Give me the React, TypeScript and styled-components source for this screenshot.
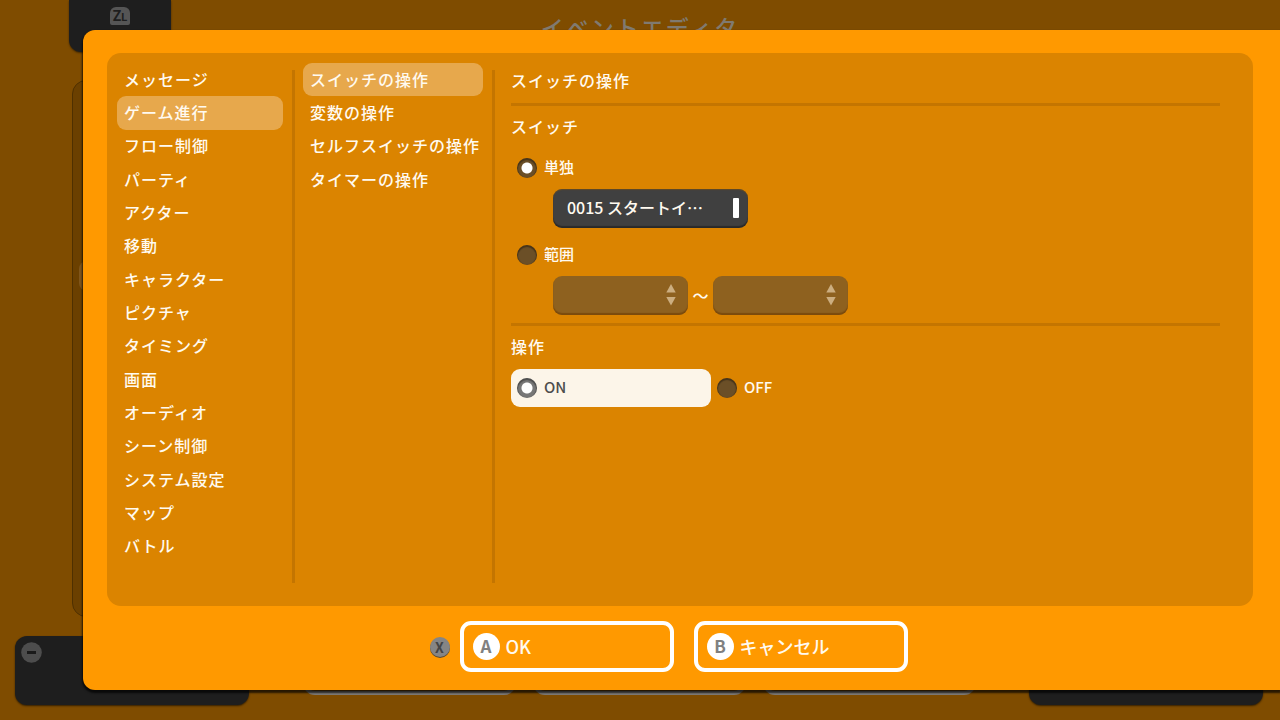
import React, { useState } from "react";
import styled, { createGlobalStyle, css } from "styled-components";

const color = {
  backdrop: "#7f4c00",
  backdropPanel: "#6b4000",
  dark: "#1e1e1e",
  modal: "#ff9900",
  panel: "#db8400",
  line: "#c47500",
  selected: "#e7a84c",
  text: "#fffaf0",
  field: "#404040",
  fieldOff: "#8e611f",
  radio: "#6b4f27",
  cream: "#fcf5e9",
};

const GlobalStyle = createGlobalStyle`
  *, *::before, *::after { box-sizing: border-box; }
  body {
    margin: 0;
    background: ${color.backdrop};
    color: ${color.text};
    font: 500 16px/24px "Noto Sans CJK JP", sans-serif;
  }
  button, select, input { margin: 0; font: inherit; color: inherit; }
  h1, h2, h3, ul { margin: 0; padding: 0; font: inherit; }
`;

const Screen = styled.div`
  position: relative;
  display: flex;
  min-height: 100vh;
  padding: 30px 0 30px 83px;
  overflow: hidden;
`;

/* Dimmed editor behind the dialog */
const Backdrop = styled.div`
  position: absolute;
  inset: 0;
  display: flex;
  flex-direction: column;
`;

const BackdropHeader = styled.header`
  display: grid;
  grid-template-columns: 1fr auto 1fr;
  height: 80px;
  padding: 0 69px;
`;

const ShoulderTab = styled.div`
  display: flex;
  justify-content: center;
  width: 102px;
  height: 52px;
  padding-top: 7px;
  border-radius: 0 0 12px 12px;
  background: ${color.dark};
  box-shadow: 0 1px 2px rgba(0, 0, 0, 0.5);
`;

const ShoulderKey = styled.span`
  width: 20px;
  height: 18px;
  border-radius: 6px 6px 2px 2px;
  background: #555;
  color: ${color.dark};
  font: bold 14px/18px Roboto, sans-serif;
  text-align: center;

  small {
    font-size: 11px;
  }
`;

const BackdropTitle = styled.h1`
  padding-top: 11px;
  color: #807a70;
  font-size: 23px;
  line-height: 32px;
  letter-spacing: 2px;
`;

const BackdropBody = styled.div`
  flex: 1;
  margin: 0 72px 19px;
  padding: 180px 6px;
  border: 1px solid #4f3000;
  border-radius: 14px;
  background: ${color.backdropPanel};
`;

const BackdropRow = styled.div`
  height: 30px;
  border-radius: 8px;
  background: #80561c;
`;

const BackdropFooter = styled.footer`
  display: flex;
  justify-content: space-between;
  align-items: flex-end;
  height: 84px;
  padding: 0 17px 15px 15px;
`;

const BackdropKey = styled.div`
  width: 234px;
  height: 69px;
  padding: 6px;
  border-radius: 12px;
  background: ${color.dark};
  box-shadow: 0 1px 2px rgba(0, 0, 0, 0.6);

  svg {
    display: block;
  }
`;

const BackdropButtons = styled.div`
  display: flex;
  gap: 17px;
  padding-bottom: 10px;
`;

const BackdropButton = styled.div`
  width: 213px;
  height: 50px;
  border: 4px solid #807c78;
  border-radius: 12px;
`;

/* Dialog */
const Dialog = styled.main`
  position: relative;
  display: flex;
  flex: 1;
  flex-direction: column;
  padding: 23px 27px 18px 24px;
  border-radius: 12px 0 0 12px;
  background: ${color.modal};
  box-shadow: 0 2px 2px 1px rgba(0, 0, 0, 0.7);
`;

const Panel = styled.div`
  display: flex;
  flex: 1;
  padding: 0 33px 0 10px;
  border-radius: 14px;
  background: ${color.panel};
`;

const Menu = styled.ul<{ $width: number }>`
  display: grid;
  grid-template-columns: minmax(0, 1fr);
  grid-template-rows: repeat(15, 1fr);
  flex: none;
  width: ${(p) => p.$width}px;
  height: 500px;
  margin-top: 10px;
  list-style: none;
`;

const MenuButton = styled.button<{ $active: boolean }>`
  display: block;
  width: 100%;
  height: 100%;
  padding: 0 0 2px 7px;
  border: 0;
  border-radius: 9px;
  background: ${(p) => (p.$active ? color.selected : "transparent")};
  letter-spacing: 1px;
  line-height: 30px;
  text-align: left;
  white-space: nowrap;
`;

const Divider = styled.div`
  flex: none;
  width: 3px;
  margin: 17px 8px 23px 9px;
  background: ${color.line};
`;

const Detail = styled.section`
  flex: 1;
  min-width: 0;
  margin-left: 8px;
  padding-top: 15px;
`;

const DetailTitle = styled.h2`
  padding-bottom: 3px;
  letter-spacing: 1px;
`;

const Rule = styled.hr`
  height: 3px;
  margin: 8px 0;
  border: 0;
  background: ${color.line};
`;

const GroupTitle = styled.h3`
  margin-bottom: 11px;
  letter-spacing: 1px;
`;

const OptionRow = styled.div`
  display: flex;
`;

const Option = styled.label<{ $highlight?: boolean }>`
  display: flex;
  align-items: center;
  gap: 7px;
  width: 200px;
  height: 38px;
  padding-left: 6px;
  border-radius: 9px;
  font-size: 15px;
  ${(p) =>
    p.$highlight &&
    css`
      background: ${color.cream};
      color: #4d4d4d;
    `}
`;

const Caption = styled.span`
  padding-bottom: 2px;
`;

const Radio = styled.input.attrs({ type: "radio" })<{ $ring?: string }>`
  appearance: none;
  width: 20px;
  height: 20px;
  border-radius: 50%;
  background: ${(p) => p.$ring ?? color.radio};
  box-shadow: inset 0 1px 1px 1px rgba(0, 0, 0, 0.35);

  &:checked {
    background: radial-gradient(circle, #fff 5px, ${(p) => p.$ring ?? color.radio} 6px);
  }
`;

const FieldRow = styled.div`
  display: flex;
  align-items: center;
  margin: 2px 0 8px 42px;
`;

const SwitchButton = styled.button`
  display: flex;
  align-items: center;
  justify-content: space-between;
  width: 195px;
  height: 39px;
  padding: 0 9px 2px 14px;
  border: 0;
  border-radius: 9px;
  background: ${color.field};
  box-shadow: inset 0 -2px 1px rgba(0, 0, 0, 0.35), inset 0 1px 1px rgba(120, 80, 20, 0.6);
`;

const Caret = styled.span`
  width: 6px;
  height: 20px;
  border-radius: 1px;
  background: #fff;
`;

const SelectBox = styled.div`
  display: grid;
  align-items: center;
  width: 135px;

  select,
  svg {
    grid-area: 1 / 1;
  }

  select {
    appearance: none;
    width: 100%;
    height: 39px;
    padding: 0 30px 0 14px;
    border: 0;
    border-radius: 9px;
    background: ${color.fieldOff};
    box-shadow: inset 0 -2px 1px rgba(110, 60, 0, 0.6);
    opacity: 1;
  }

  svg {
    justify-self: end;
    margin: 0 12px 2px 0;
    pointer-events: none;
  }
`;

const Tilde = styled.span`
  width: 25px;
  padding-bottom: 2px;
  text-align: center;
`;

const Footer = styled.footer`
  display: flex;
  align-items: center;
  justify-content: center;
  gap: 20px;
  padding: 15px 23px 0 0;
`;

const OkGroup = styled.div`
  display: flex;
  align-items: center;
  gap: 10px;
`;

const FooterButton = styled.button`
  display: flex;
  align-items: center;
  gap: 6px;
  width: 214px;
  height: 51px;
  padding: 0 9px;
  border: 4px solid #fff;
  border-radius: 11px;
  background: transparent;
  font-size: 18px;
`;

const PadKey = styled.span<{ $small?: boolean }>`
  width: ${(p) => (p.$small ? 20 : 27)}px;
  height: ${(p) => (p.$small ? 20 : 27)}px;
  border-radius: 50%;
  background: ${(p) => (p.$small ? "#858585" : "#fff")};
  color: ${(p) => (p.$small ? "#444" : "#808080")};
  font: bold ${(p) => (p.$small ? "14px/20px" : "17px/26px")} "Noto Sans CJK JP", sans-serif;
  text-align: center;
  ${(p) => p.$small && "box-shadow: 0 1px 0 #5a4a30;"}
`;

const categories = [
  "メッセージ",
  "ゲーム進行",
  "フロー制御",
  "パーティ",
  "アクター",
  "移動",
  "キャラクター",
  "ピクチャ",
  "タイミング",
  "画面",
  "オーディオ",
  "シーン制御",
  "システム設定",
  "マップ",
  "バトル",
];

const commands = ["スイッチの操作", "変数の操作", "セルフスイッチの操作", "タイマーの操作"];

function MenuList({ items, initial, width, label }: { items: string[]; initial: number; width: number; label: string }) {
  const [active, setActive] = useState(initial);
  return (
    <Menu $width={width} aria-label={label}>
      {items.map((item, i) => (
        <li key={item}>
          <MenuButton type="button" $active={i === active} aria-pressed={i === active} onClick={() => setActive(i)}>
            {item}
          </MenuButton>
        </li>
      ))}
    </Menu>
  );
}

function RangeSelect({ label, disabled }: { label: string; disabled: boolean }) {
  return (
    <SelectBox>
      <select aria-label={label} disabled={disabled} defaultValue="">
        <option value="" />
      </select>
      <svg width="10" height="22" viewBox="0 0 10 22" fill="#ccae80" aria-hidden="true">
        <path d="M5 0 9.700 8.500H.3z" />
        <path d="M.3 13h9.400L5 21.500z" />
      </svg>
    </SelectBox>
  );
}

export default function App() {
  const [target, setTarget] = useState("single");
  const [operation, setOperation] = useState("on");

  return (
    <>
      <GlobalStyle />
      <Screen>
        <Backdrop aria-hidden="true">
          <BackdropHeader>
            <ShoulderTab>
              <ShoulderKey>
                Z<small>L</small>
              </ShoulderKey>
            </ShoulderTab>
            <BackdropTitle>イベントエディタ</BackdropTitle>
          </BackdropHeader>
          <BackdropBody>
            <BackdropRow />
          </BackdropBody>
          <BackdropFooter>
            <BackdropKey>
              <svg width="21" height="21" viewBox="0 0 21 21">
                <circle cx="10.500" cy="10.500" r="10.300" fill="#4d4d4d" />
                <path d="M6 9h9v3H6z" fill="#1a1a1a" />
              </svg>
            </BackdropKey>
            <BackdropButtons>
              <BackdropButton />
              <BackdropButton />
              <BackdropButton />
            </BackdropButtons>
            <BackdropKey />
          </BackdropFooter>
        </Backdrop>

        <Dialog>
          <Panel>
            <MenuList items={categories} initial={1} width={166} label="カテゴリ" />
            <Divider />
            <MenuList items={commands} initial={0} width={180} label="コマンド" />
            <Divider />
            <Detail>
              <DetailTitle>スイッチの操作</DetailTitle>
              <Rule />
              <div role="radiogroup" aria-labelledby="target-title">
                <GroupTitle id="target-title">スイッチ</GroupTitle>
                <Option>
                  <Radio name="target" checked={target === "single"} onChange={() => setTarget("single")} />
                  <Caption>単独</Caption>
                </Option>
                <FieldRow>
                  <SwitchButton type="button">
                    <Caption>0015 スタートイ…</Caption>
                    <Caret />
                  </SwitchButton>
                </FieldRow>
                <Option>
                  <Radio name="target" checked={target === "range"} onChange={() => setTarget("range")} />
                  <Caption>範囲</Caption>
                </Option>
                <FieldRow>
                  <RangeSelect label="範囲の開始" disabled={target !== "range"} />
                  <Tilde>～</Tilde>
                  <RangeSelect label="範囲の終了" disabled={target !== "range"} />
                </FieldRow>
              </div>
              <Rule />
              <div role="radiogroup" aria-labelledby="operation-title">
                <GroupTitle id="operation-title">操作</GroupTitle>
                <OptionRow>
                  <Option $highlight={operation === "on"}>
                    <Radio
                      name="operation"
                      $ring={operation === "on" ? "#777" : undefined}
                      checked={operation === "on"}
                      onChange={() => setOperation("on")}
                    />
                    <Caption>ON</Caption>
                  </Option>
                  <Option $highlight={operation === "off"}>
                    <Radio
                      name="operation"
                      $ring={operation === "off" ? "#777" : undefined}
                      checked={operation === "off"}
                      onChange={() => setOperation("off")}
                    />
                    <Caption>OFF</Caption>
                  </Option>
                </OptionRow>
              </div>
            </Detail>
          </Panel>
          <Footer>
            <OkGroup>
              <PadKey $small>X</PadKey>
              <FooterButton type="button">
                <PadKey>A</PadKey>
                <Caption>OK</Caption>
              </FooterButton>
            </OkGroup>
            <FooterButton type="button">
              <PadKey>B</PadKey>
              <Caption>キャンセル</Caption>
            </FooterButton>
          </Footer>
        </Dialog>
      </Screen>
    </>
  );
}
